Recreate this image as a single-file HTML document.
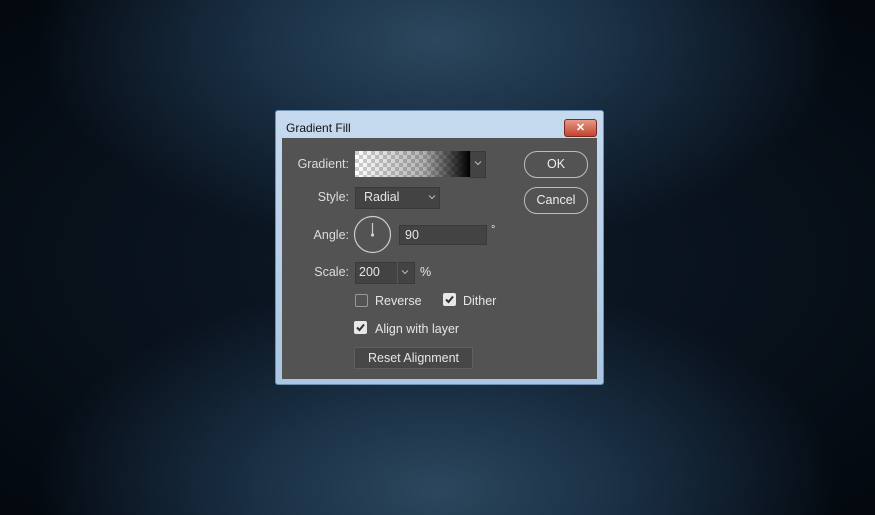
<!DOCTYPE html>
<html><head><style>
body{margin:0;width:875px;height:515px;overflow:hidden;position:relative;font-family:"Liberation Sans",sans-serif;
background:
radial-gradient(ellipse 400px 210px at 437px 40px,#2c475e 0%,#1a3045 45%,rgba(8,16,26,0) 100%),
radial-gradient(ellipse 400px 210px at 437px 490px,#2c475e 0%,#1a3045 45%,rgba(8,16,26,0) 100%),
radial-gradient(ellipse 620px 330px at 437px 260px,#0d1a28 0%,#040910 100%);}
.a{position:absolute}
.dlg{left:275px;top:110px;width:327px;height:273px;background:linear-gradient(#c6daef,#aac6e3);border:1px solid #6f8fb2;border-radius:3px}
.title{left:286px;top:121px;font-size:12px;color:#111}
.close{left:564px;top:119px;width:31px;height:16px;background:linear-gradient(#e49a8a,#c4432c);border:1px solid #7a2a20;border-radius:3px;color:#fff;font-size:11px;font-weight:bold;text-align:center;line-height:16px}
.panel{left:282px;top:138px;width:315px;height:241px;background:#535353}
.lbl{color:#dcdcdc;font-size:12.5px;text-align:right;width:70px}
.t{color:#e6e6e6;font-size:12.5px}
.box{background:#434343;border:1px solid #3a3a3a}
.btn{border:1.5px solid #bdbdbd;border-radius:13px;color:#eee;font-size:12.5px;text-align:center}
.cb{width:11px;height:11px;border:1px solid #9a9a9a;border-radius:2px}
.cbc{width:13px;height:13px;background:#e8e8e8;border-radius:2px}
</style></head><body>
<div class="a dlg"></div>
<div class="a title">Gradient Fill</div>
<div class="a close">✕</div>
<div class="a panel"></div>

<div class="a lbl" style="left:279px;top:157px">Gradient:</div>
<div class="a" style="left:355px;top:151px;width:115px;height:26px;background:
linear-gradient(90deg,rgba(0,0,0,0) 0%,rgba(0,0,0,.3) 60%,rgba(0,0,0,1) 100%),
repeating-conic-gradient(#fff 0 25%,#cfcfcf 0 50%) 0 0/8px 8px;"></div>
<div class="a box" style="left:470px;top:151px;width:14px;height:25px"></div>
<svg class="a" style="left:474px;top:160px" width="8" height="6"><path d="M1 1.5L4 4.5L7 1.5" fill="none" stroke="#bbb" stroke-width="1"/></svg>

<div class="a lbl" style="left:279px;top:190px">Style:</div>
<div class="a box" style="left:355px;top:187px;width:83px;height:20px"></div>
<div class="a t" style="left:364px;top:190px">Radial</div>
<svg class="a" style="left:428px;top:194px" width="8" height="6"><path d="M1 1.5L4 4.5L7 1.5" fill="none" stroke="#bbb" stroke-width="1"/></svg>

<div class="a lbl" style="left:279px;top:228px">Angle:</div>
<svg class="a" style="left:353px;top:215px" width="39" height="39"><circle cx="19.5" cy="19.5" r="18" fill="none" stroke="#ccc" stroke-width="1.2"/><line x1="19.5" y1="8" x2="19.5" y2="20" stroke="#ccc" stroke-width="1.2"/><circle cx="19.5" cy="20" r="1.6" fill="#ccc"/></svg>
<div class="a box" style="left:399px;top:225px;width:86px;height:18px"></div>
<div class="a t" style="left:405px;top:228px">90</div>
<div class="a t" style="left:491px;top:224px;font-size:11px">°</div>

<div class="a lbl" style="left:279px;top:265px">Scale:</div>
<div class="a box" style="left:355px;top:262px;width:58px;height:20px"></div>
<div class="a" style="left:397px;top:262px;width:1px;height:22px;background:#555"></div>
<div class="a t" style="left:359px;top:265px">200</div>
<svg class="a" style="left:401px;top:269px" width="8" height="6"><path d="M1 1.5L4 4.5L7 1.5" fill="none" stroke="#bbb" stroke-width="1"/></svg>
<div class="a t" style="left:420px;top:265px">%</div>

<div class="a cb" style="left:355px;top:294px"></div>
<div class="a t" style="left:375px;top:294px">Reverse</div>
<div class="a cbc" style="left:443px;top:293px"></div>
<svg class="a" style="left:443px;top:293px" width="13" height="13"><path d="M3 6.5L5.5 9L10 3.5" fill="none" stroke="#333" stroke-width="2"/></svg>
<div class="a t" style="left:463px;top:294px">Dither</div>
<div class="a cbc" style="left:354px;top:321px"></div>
<svg class="a" style="left:354px;top:321px" width="13" height="13"><path d="M3 6.5L5.5 9L10 3.5" fill="none" stroke="#333" stroke-width="2"/></svg>
<div class="a t" style="left:375px;top:322px">Align with layer</div>

<div class="a" style="left:354px;top:347px;width:117px;height:20px;background:#474747;border:1px solid #5f5f5f"></div>
<div class="a t" style="left:354px;top:351px;width:119px;text-align:center">Reset Alignment</div>

<div class="a btn" style="left:524px;top:151px;width:62px;height:25px;line-height:25px">OK</div>
<div class="a btn" style="left:524px;top:187px;width:62px;height:25px;line-height:25px">Cancel</div>
</body></html>
